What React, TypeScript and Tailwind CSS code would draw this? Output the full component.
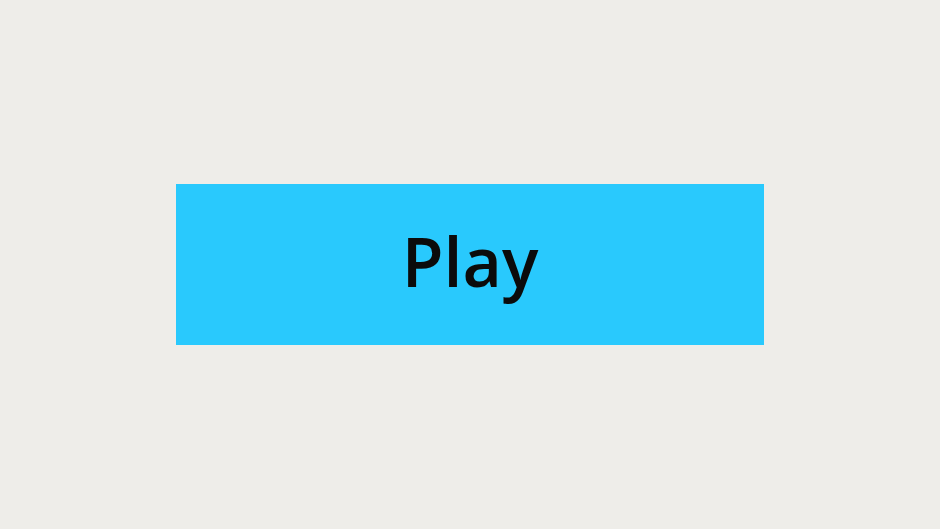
import React from 'react';

export default function App() {
  return (
    <div className="flex h-[529px] w-full items-center justify-center bg-[#eeede9]">
      <button
        type="button"
        className="flex h-[161px] w-[588px] items-center justify-center bg-[#29c9fd] pb-[8px] text-[68px] leading-none font-semibold text-[#0b0b0b]"
        style={{ fontFamily: '"Open Sans", sans-serif' }}
      >
        Play
      </button>
    </div>
  );
}
